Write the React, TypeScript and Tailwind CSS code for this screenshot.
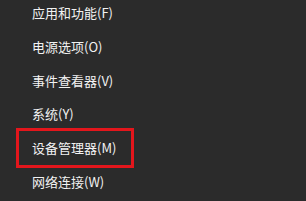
import React from "react";

const items = ["应用和功能(F)", "电源选项(O)", "事件查看器(V)", "系统(Y)", "设备管理器(M)", "网络连接(W)"];

export default function App() {
  return (
    <div
      className="w-[306px] h-[201px] bg-[#2b2b2b] overflow-hidden pl-[32px] pt-[4px] flex flex-col gap-[16.8px] text-[#f2f2f2] text-[13px] leading-[17px]"
      style={{ fontFamily: '"Noto Sans CJK SC", "Noto Sans", sans-serif' }}
    >
      {items.map((t, i) => (
        <div key={t} className="relative w-fit whitespace-nowrap">
          {i === 4 && (
            <span className="absolute left-[-16px] right-[-18px] top-[-11px] bottom-[-12px] border-[3px] border-[#e3161c]" />
          )}
          {t}
        </div>
      ))}
    </div>
  );
}
